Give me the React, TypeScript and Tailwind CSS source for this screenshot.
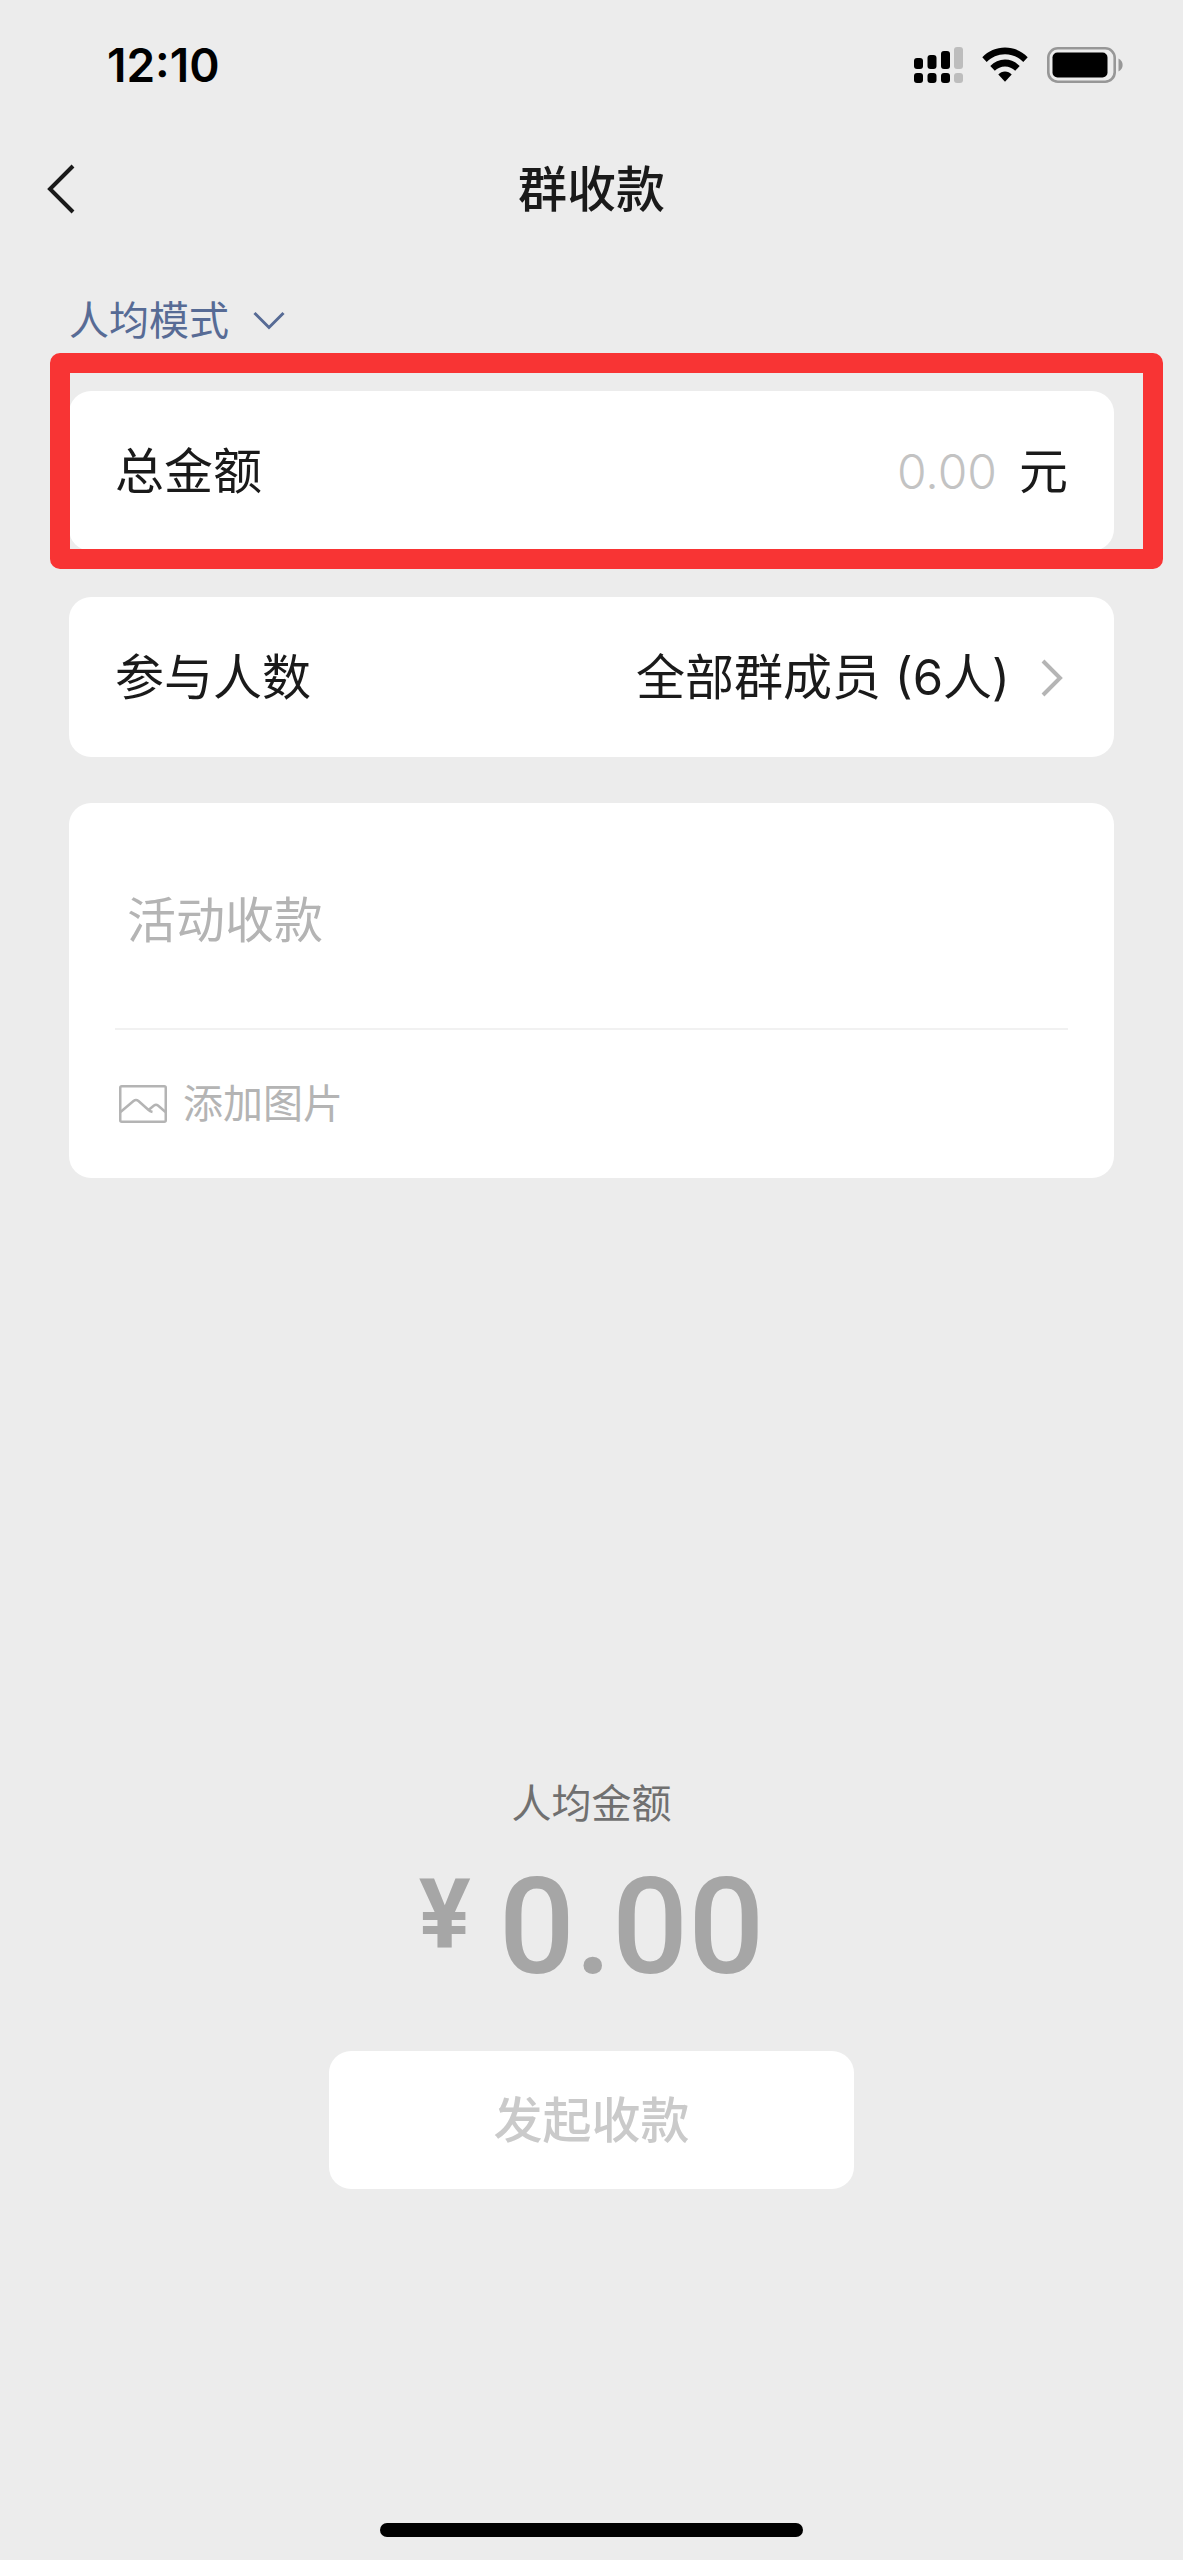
import { useState } from 'react';
import type { ReactNode } from 'react';
import { clsx } from 'clsx';

type CardProps = {
  children: ReactNode;
  className?: string;
};

const MODES = ['人均模式', '指定金额'];

function SignalIcon() {
  return (
    <svg width="49" height="36" viewBox="0 0 49 36" aria-hidden="true">
      <rect x="0" y="11" width="9" height="11" rx="3" />
      <rect x="13.5" y="8" width="9" height="14" rx="3" />
      <rect x="27" y="4" width="9" height="18" rx="3" />
      <rect x="40" y="0" width="9" height="22" rx="3" fill="#bdbdbd" />
      <rect x="0" y="26" width="9" height="10" rx="3" />
      <rect x="13.5" y="26" width="9" height="10" rx="3" />
      <rect x="27" y="26" width="9" height="10" rx="3" />
      <rect x="40" y="26" width="9" height="10" rx="3" fill="#bdbdbd" />
    </svg>
  );
}

function WifiIcon() {
  return (
    <svg width="46" height="36" viewBox="0 0 46 36" aria-hidden="true">
      <path d="M0.3 10.3C6.3 4 14.3 0.5 23 0.5S39.7 4 45.7 10.3L41.3 15C36.5 10 30 7.2 23 7.2S9.5 10 4.7 15Z" />
      <path d="M8.3 19C12.2 14.9 17.3 12.6 23 12.6S33.8 14.9 37.7 19L33.2 23.8C30.5 21 27 19.4 23 19.4S15.5 21 12.8 23.8Z" />
      <path d="M16.3 27.6C18.1 25.7 20.4 24.6 23 24.6S27.9 25.7 29.7 27.6L23 34.8Z" />
    </svg>
  );
}

function BatteryIcon() {
  return (
    <svg width="76" height="36" viewBox="0 0 76 36" aria-hidden="true">
      <rect x="1.3" y="1.3" width="66.4" height="33.4" rx="9.5" fill="none" stroke="#979797" strokeWidth="2.6" />
      <rect x="5.5" y="5.5" width="55" height="25" rx="5" />
      <path d="M71.5 11.5C77 14 77 22 71.5 24.5Z" fill="#979797" />
    </svg>
  );
}

function PictureIcon() {
  return (
    <svg width="48" height="38" viewBox="0 0 48 38" fill="none" stroke="#b4b4b4" strokeWidth="2.5" aria-hidden="true">
      <rect x="1.25" y="1.25" width="45.5" height="35.5" rx="1.5" />
      <path d="M1.5 27L14.5 16Q17 14 19.5 16L29 24.5Q31 26.500 33.5 27" />
      <path d="M29.5 25L35 20.5Q37 19 39 20.5L46.5 27" />
    </svg>
  );
}

function Card({ children, className }: CardProps) {
  return <section className={clsx('relative rounded-[22px] bg-white px-[46px]', className)}>{children}</section>;
}

function StatusBar() {
  return (
    <div className="flex h-[130px] items-center justify-between pl-[107px] pr-[60px]">
      <span className="text-[46px] font-semibold leading-[60px] text-black">12:10</span>
      <div className="flex items-center gap-[19px]">
        <SignalIcon />
        <WifiIcon />
        <BatteryIcon />
      </div>
    </div>
  );
}

function Header() {
  return (
    <header className="grid h-[118px] grid-cols-[1fr_auto_1fr] items-center px-[46px]">
      <button type="button" aria-label="返回" className="justify-self-start">
        <svg width="30" height="50" viewBox="0 0 30 50" fill="none" stroke="#1a1a1a" strokeWidth="4" aria-hidden="true">
          <path d="M27 2L4 25L27 48" />
        </svg>
      </button>
      <h1 className="pt-[2px] text-[49px] font-medium leading-[60px]">群收款</h1>
    </header>
  );
}

export default function App() {
  const [mode, setMode] = useState(MODES[0]);
  const [amount, setAmount] = useState('');
  const [note, setNote] = useState('');

  return (
    <div className="flex min-h-screen flex-col bg-[#ececec] font-['Inter','Noto_Sans_CJK_SC',sans-serif] text-[#1a1a1a]">
      <StatusBar />
      <Header />

      <main className="flex flex-1 flex-col px-[69px] pt-[43px]">
        <div className="flex items-center text-[#576b95]">
          <select
            aria-label="收款模式"
            value={mode}
            onChange={(e) => setMode(e.target.value)}
            className="h-[60px] appearance-none bg-transparent text-[40px] leading-[60px]"
          >
            {MODES.map((item) => (
              <option key={item}>{item}</option>
            ))}
          </select>
          <svg
            width="32"
            height="20"
            viewBox="0 0 32 20"
            fill="none"
            stroke="currentColor"
            strokeWidth="3"
            className="ml-[24px]"
            aria-hidden="true"
          >
            <path d="M1.5 2L16 16.5L30.5 2" />
          </svg>
        </div>

        <div className="mt-[40px] flex flex-col gap-[46px]">
          <Card className="flex h-[160px] items-center justify-between pt-[2px]">
            <label htmlFor="amount" className="text-[49px] leading-[60px]">
              总金额
            </label>
            <div className="flex min-w-0 items-center gap-[22px]">
              <input
                id="amount"
                inputMode="decimal"
                placeholder="0.00"
                value={amount}
                onChange={(e) => setAmount(e.target.value)}
                className="w-[300px] bg-transparent text-right text-[48px] font-light leading-[60px] outline-none placeholder:text-[#c3c3c3]"
              />
              <span className="text-[49px] leading-[60px]">元</span>
            </div>
            {/* highlight frame around the total amount row */}
            <div className="pointer-events-none absolute -bottom-[18px] -left-[19px] -right-[49px] -top-[38px] rounded-[10px] border-[20px] border-[#f83434]" />
          </Card>

          <Card>
            <button type="button" className="flex h-[160px] w-full items-center pt-[2px] text-[49px] leading-[60px]">
              <span>参与人数</span>
              <span className="ml-auto">全部群成员 (6人)</span>
              <svg
                width="24"
                height="40"
                viewBox="0 0 24 40"
                fill="none"
                stroke="#b5b5b5"
                strokeWidth="4"
                className="ml-[30px] mr-[4px]"
                aria-hidden="true"
              >
                <path d="M3 3L20 20L3 37" />
              </svg>
            </button>
          </Card>

          <Card>
            <input
              aria-label="收款说明"
              placeholder="活动收款"
              value={note}
              onChange={(e) => setNote(e.target.value)}
              className="mb-[77px] mt-[88px] block h-[60px] w-full bg-transparent pl-[12px] text-[49px] leading-[60px] outline-none placeholder:text-[#b4b4b4]"
            />
            <div className="border-t-2 border-[#f1f1f1] pb-[44px] pt-[44px]">
              <button type="button" className="flex items-center gap-[16px] pl-[4px] text-[40px] leading-[60px] text-[#b4b4b4]">
                <PictureIcon />
                添加图片
              </button>
            </div>
          </Card>
        </div>

        <div className="mt-auto flex flex-col items-center">
          <p className="text-[40px] leading-[60px] text-[#707070]">人均金额</p>
          <p className="mt-[14px] flex items-start gap-[28px] font-['Roboto',sans-serif] text-[#a6a6a6]">
            <span className="mt-[16px] text-[97px] font-bold leading-[100px]">¥</span>
            <span className="text-[134px] font-medium leading-[160px]">0.00</span>
          </p>
          <button
            type="button"
            disabled
            className="mt-[43px] h-[138px] w-[525px] rounded-[22px] bg-white pt-[2px] text-[49px] font-medium leading-[60px] text-[#cacaca]"
          >
            发起收款
          </button>
        </div>
      </main>

      <footer className="flex h-[371px] items-end justify-center pb-[23px]">
        <div className="h-[14px] w-[423px] rounded-full bg-black" />
      </footer>
    </div>
  );
}
